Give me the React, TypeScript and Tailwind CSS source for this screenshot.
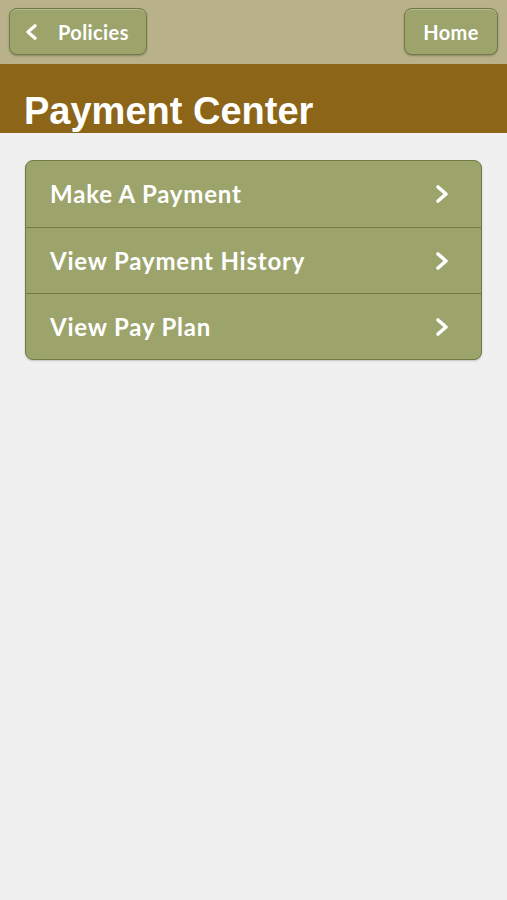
const lato = { fontFamily: 'Lato, "Open Sans", sans-serif' };

function Chevron({ dir = 'right', className }: { dir?: 'left' | 'right'; className?: string }) {
  return (
    <svg viewBox="0 0 14 20" className={className} fill="none">
      <path
        d={dir === 'right' ? 'M3 3 L11 10 L3 17' : 'M11 3 L3 10 L11 17'}
        stroke="white"
        strokeWidth="3.6"
        strokeLinecap="round"
        strokeLinejoin="round"
      />
    </svg>
  );
}

function NavButton({ children, className }: { children: React.ReactNode; className?: string }) {
  return (
    <button
      className={
        'flex h-[47px] items-center rounded-lg border border-[#6f7a47] bg-[#9ca46c] text-[20px] font-bold tracking-[0.4px] text-white shadow-[inset_0_1px_0_rgba(255,255,255,0.25),0_1px_2px_rgba(0,0,0,0.25)] ' +
        (className ?? '')
      }
      style={lato}
    >
      {children}
    </button>
  );
}

const items = ['Make A Payment', 'View Payment History', 'View Pay Plan'];

export default function App() {
  return (
    <div className="min-h-[900px] bg-[#f0f0f0]">
      <header className="flex h-16 items-start justify-between bg-[#b8b18a] px-[9px] pt-2">
        <NavButton className="w-[138px] pl-[15px]">
          <Chevron dir="left" className="h-[18px] w-[13px]" />
          <span className="ml-[20px]">Policies</span>
        </NavButton>
        <NavButton className="w-[94px] justify-center">Home</NavButton>
      </header>
      <div className="h-[69px] overflow-hidden bg-[#8c6519] pl-[24px] pt-[28px]">
        <h1
          className="text-[38px] leading-[38px] font-bold text-white"
          style={{ fontFamily: '"Liberation Sans", Arial, sans-serif' }}
        >
          Payment Center
        </h1>
      </div>
      <main className="px-[25px] pt-[27px]">
        <ul
          className="overflow-hidden rounded-lg border border-[#6f7a47] bg-[#9ca46c] shadow-[0_1px_2px_rgba(0,0,0,0.2)]"
          style={lato}
        >
          {items.map((item, i) => (
            <li
              key={item}
              className={
                'flex h-[66px] items-center justify-between pl-[24px] pr-[32px] text-[24px] font-bold tracking-[0.8px] text-white ' +
                (i > 0 ? 'border-t border-[#6f7a47]' : '')
              }
            >
              <span>{item}</span>
              <Chevron className="h-[20px] w-[14px]" />
            </li>
          ))}
        </ul>
      </main>
    </div>
  );
}
